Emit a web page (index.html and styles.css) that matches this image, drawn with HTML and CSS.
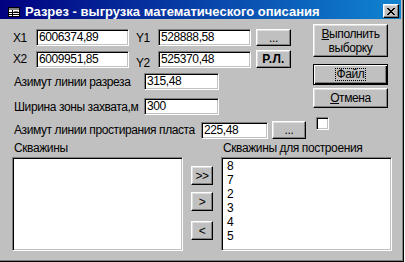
FILE: index.html
```html
<!DOCTYPE html>
<html lang="ru">
<head>
  <meta charset="UTF-8">
  <title>Разрез - выгрузка математического описания</title>
  <link rel="stylesheet" href="styles.css">
</head>
<body>
  <div class="window">
    <div class="titlebar">
      <svg class="app-icon" width="12" height="10" viewBox="0 0 12 10">
        <rect x="0.5" y="0.5" width="11" height="9" fill="#fff" stroke="#000"/>
        <rect x="1" y="1" width="10" height="2" fill="#808080"/>
        <path d="M1 5.5H11M1 7.5H11M4.5 3V9" stroke="#000" stroke-width="1"/>
        <rect x="6" y="4" width="4" height="1" fill="#808080"/>
      </svg>
      <span class="title">Разрез - выгрузка математического описания</span>
      <div class="close-btn">
        <svg width="8" height="7" viewBox="0 0 8 7">
          <path d="M0 0h2v1h1v1h2v-1h1v-1h2v1h-1v1h-1v1h-1v1h1v1h1v1h1v1h-2v-1h-1v-1h-2v1h-1v1h-2v-1h1v-1h1v-1h1v-1h-1v-1h-1v-1h-1z" fill="#000"/>
        </svg>
      </div>
    </div>

    <div class="dialog">
      <div class="top">
        <div class="fields">
          <div class="row row-coords">
            <span class="lbl-x">X1</span>
            <div class="field w-coord">6006374,89</div>
            <span class="lbl-y">Y1</span>
            <div class="field w-coord">528888,58</div>
            <div class="btn btn-dots">...</div>
          </div>
          <div class="row row-coords row-second">
            <span class="lbl-x">X2</span>
            <div class="field w-coord">6009951,85</div>
            <span class="lbl-y lbl-low">Y2</span>
            <div class="field w-coord">525370,48</div>
            <div class="btn btn-dots btn-rl">Р.Л.</div>
          </div>
          <div class="row row-param">
            <span class="lbl-param">Азимут линии разреза</span>
            <div class="field w-param">315,48</div>
          </div>
          <div class="row row-param row-width">
            <span class="lbl-param">Ширина зоны захвата,м</span>
            <div class="field w-param">300</div>
          </div>
          <div class="row row-strike">
            <span class="lbl-strike">Азимут линии простирания пласта</span>
            <div class="field w-strike">225,48</div>
            <div class="btn btn-strike">...</div>
          </div>
        </div>

        <div class="actions">
          <div class="btn btn-run"><span><u>В</u>ыполнить<br>выборку</span></div>
          <div class="btn btn-default"><span class="focus">Файл</span></div>
          <div class="btn btn-cancel"><span><u>О</u>тмена</span></div>
          <div class="checkbox"></div>
        </div>
      </div>

      <div class="bottom">
        <span class="list-caption">Скважины</span>
        <span></span>
        <span class="list-caption">Скважины для построения</span>

        <div class="listbox"></div>
        <div class="movers">
          <div class="btn btn-move mv-all">&gt;&gt;</div>
          <div class="btn btn-move mv-one">&gt;</div>
          <div class="btn btn-move mv-back">&lt;</div>
        </div>
        <div class="listbox">
          <div class="item">8</div>
          <div class="item">7</div>
          <div class="item">2</div>
          <div class="item">3</div>
          <div class="item">4</div>
          <div class="item">5</div>
        </div>
      </div>
    </div>
  </div>
</body>
</html>
```

FILE: styles.css
```css
* {
  box-sizing: border-box;
}
body {
  margin: 0;
  background: #fff;
  font-family: "Liberation Sans", Arial, sans-serif;
  font-size: 12px;
  letter-spacing: -0.4px;
  color: #000;
}
.window {
  width: 404px;
  height: 262px;
  background: #c0c0c0;
  border-right: 1px solid #000;
  border-bottom: 1px solid #000;
  box-shadow: inset -1px -1px #808080;
  padding-right: 2px;
  display: flex;
  flex-direction: column;
}
.titlebar {
  height: 19px;
  flex: none;
  background: linear-gradient(to right, #000080, #1084d0);
  color: #fff;
  display: flex;
  align-items: flex-start;
  padding: 0 2px 0 8px;
}
.app-icon {
  margin-top: 7px;
  margin-right: 5px;
  flex: none;
}
.title {
  flex: 1;
  font-size: 13px;
  font-weight: bold;
  letter-spacing: 0;
  line-height: 15px;
  padding-top: 4px;
  white-space: nowrap;
}
.close-btn {
  width: 16px;
  height: 14px;
  margin-top: 4px;
  background: #c0c0c0;
  border: 1px solid;
  border-color: #fff #000 #000 #fff;
  box-shadow: inset -1px -1px #808080, inset 1px 1px #dfdfdf;
  display: flex;
  align-items: center;
  justify-content: center;
}

/* controls */
.field {
  height: 17px;
  background: #fff;
  border: 1px solid;
  border-color: #808080 #fff #fff #808080;
  box-shadow: inset 1px 1px #000, inset -1px -1px #c0c0c0;
  padding-left: 2px;
  line-height: 15px;
  white-space: nowrap;
  overflow: hidden;
}
.btn {
  background: #c0c0c0;
  border: 1px solid;
  border-color: #fff #000 #000 #fff;
  box-shadow: inset -1px -1px #808080, inset 1px 1px #dfdfdf;
  display: flex;
  align-items: center;
  justify-content: center;
  text-align: center;
  line-height: 14px;
}
.btn u {
  text-decoration: underline;
  text-underline-offset: 1px;
}

/* top part */
.dialog {
  flex: 1;
  display: flex;
  flex-direction: column;
}
.top {
  display: flex;
  height: 119px;
}
.fields {
  width: 313px;
  padding-top: 10px;
}
.row {
  display: flex;
  align-items: center;
  height: 17px;
}
.row-second {
  margin-top: 4px;
  height: 18px;
}
.lbl-x {
  width: 36px;
  padding-left: 13px;
}
.lbl-y {
  width: 29px;
  padding-left: 7px;
}
.lbl-low {
  align-self: flex-end;
  line-height: 14px;
  margin-bottom: -2px;
}
.w-coord {
  width: 93px;
}
.btn-dots {
  width: 35px;
  height: 17px;
  margin-left: 5px;
}
.btn-rl {
  height: 18px;
  font-weight: bold;
  letter-spacing: 0.3px;
}
.row-param {
  margin-top: 5px;
}
.row-width {
  margin-top: 8px;
}
.lbl-param {
  width: 144px;
  padding-left: 14px;
}
.w-param {
  width: 75px;
}
.row-strike {
  margin-top: 6px;
  height: 18px;
}
.lbl-strike {
  width: 201px;
  padding-left: 14px;
}
.w-strike {
  width: 67px;
}
.btn-strike {
  width: 34px;
  height: 18px;
  margin-left: 4px;
}

.actions {
  width: 75px;
  padding-top: 5px;
  display: flex;
  flex-direction: column;
}
.btn-run {
  height: 33px;
}
.btn-default {
  height: 21px;
  margin-top: 7px;
  border: 1px solid #000;
  box-shadow: inset 1px 1px #fff, inset -1px -1px #000, inset -2px -2px #808080;
}
.focus {
  border: 1px dotted #000;
  padding: 0 1px;
  line-height: 11px;
}
.btn-cancel {
  height: 20px;
  margin-top: 3px;
}
.checkbox {
  width: 13px;
  height: 13px;
  margin: 9px 0 0 3px;
  background: #fff;
  border: 1px solid;
  border-color: #808080 #fff #fff #808080;
  box-shadow: inset 1px 1px #000, inset -1px -1px #c0c0c0;
}

/* lists */
.bottom {
  display: grid;
  grid-template-columns: 171px 22px 171px;
  grid-template-rows: 19px 94px;
  column-gap: 8px;
  padding-left: 12px;
}
.list-caption {
  padding-left: 2px;
  padding-top: 3px;
  line-height: 14px;
}
.listbox {
  background: #fff;
  border: 1px solid;
  border-color: #808080 #fff #fff #808080;
  box-shadow: inset 1px 1px #000, inset -1px -1px #c0c0c0;
  padding: 1px 0 0 5px;
}
.item {
  line-height: 14px;
}
.movers {
  display: flex;
  flex-direction: column;
}
.btn-move {
  height: 19px;
}
.mv-all {
  margin-top: 9px;
}
.mv-one {
  margin-top: 7px;
}
.mv-back {
  margin-top: 10px;
}
```
